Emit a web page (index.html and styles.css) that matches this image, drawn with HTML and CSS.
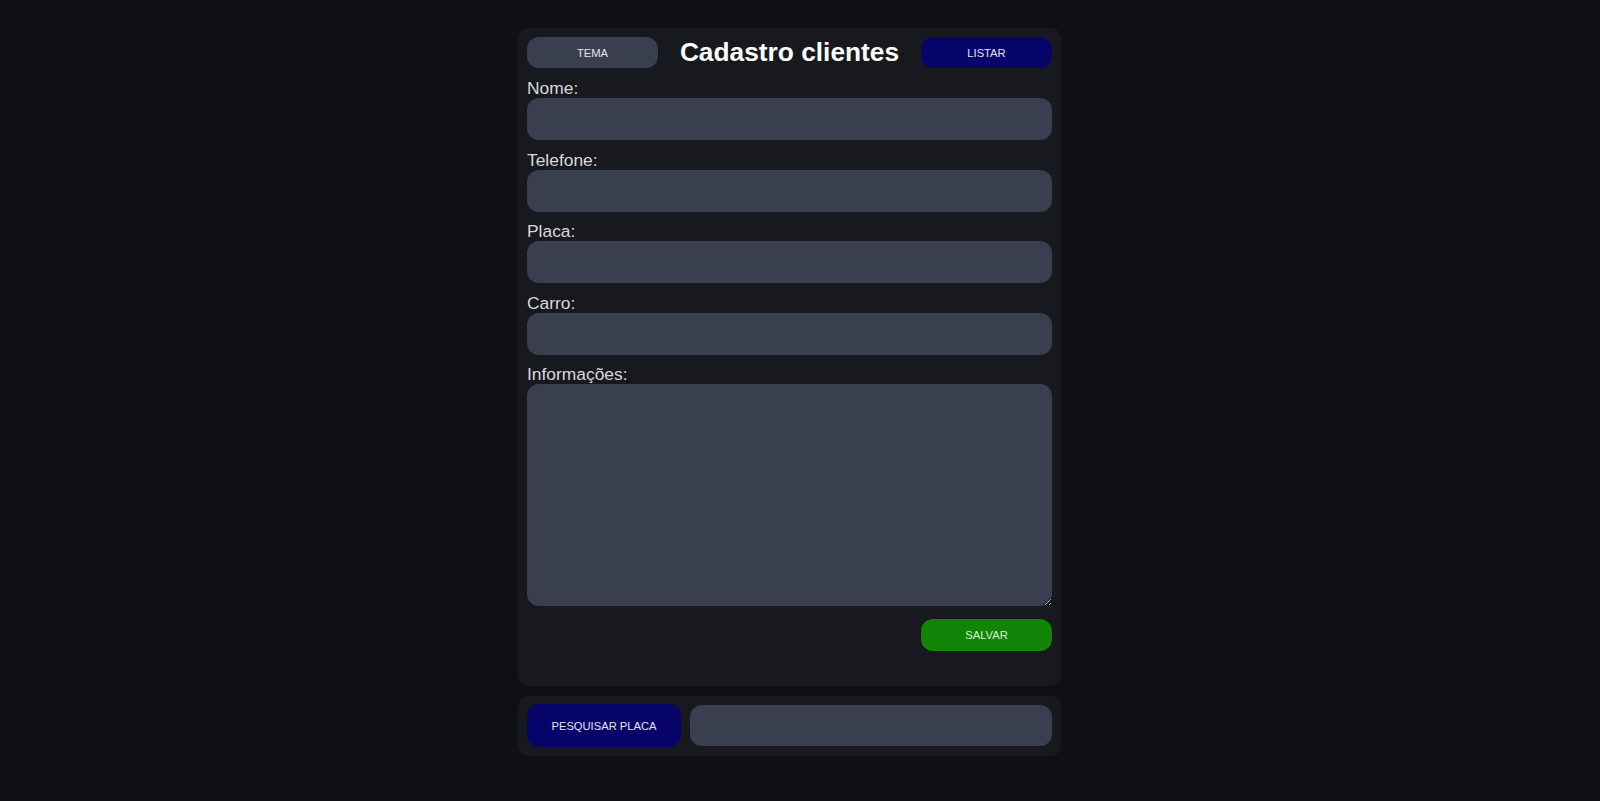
FILE: index.html
```html
<!DOCTYPE html>
<html lang="pt-BR">
<head>
<meta charset="utf-8">
<title>Cadastro clientes</title>
<link rel="stylesheet" href="styles.css">
</head>
<body>
<main class="page">
  <section class="card form-card">
    <header class="top-row">
      <button class="btn btn-gray">TEMA</button>
      <h1 class="title">Cadastro clientes</h1>
      <button class="btn btn-navy">LISTAR</button>
    </header>
    <form class="form">
      <label class="field"><span class="label">Nome:</span><input class="input" type="text"></label>
      <label class="field"><span class="label">Telefone:</span><input class="input" type="text"></label>
      <label class="field"><span class="label">Placa:</span><input class="input" type="text"></label>
      <label class="field"><span class="label">Carro:</span><input class="input" type="text"></label>
      <label class="field"><span class="label">Informações:</span><textarea class="textarea"></textarea></label>
      <div class="actions"><button type="button" class="btn btn-green">SALVAR</button></div>
    </form>
  </section>
  <section class="card search-card">
    <button class="btn btn-navy btn-search">PESQUISAR PLACA</button>
    <input class="input search-input" type="text">
  </section>
</main>
</body>
</html>
```
FILE: styles.css
```css
html, body {
  margin: 0;
  padding: 0;
  background: #0e1015;
  font-family: "Liberation Sans", Arial, sans-serif;
}
.page {
  display: flex;
  flex-direction: column;
  align-items: center;
  padding: 28px 21px 0 0;
  gap: 9.5px;
}
.card {
  width: 543px;
  box-sizing: border-box;
  background: #18191e;
  border-radius: 10px;
}
.form-card {
  padding: 9px 9px 35px 9px;
}
.top-row {
  display: flex;
  align-items: center;
  justify-content: space-between;
  height: 31px;
}
.title {
  margin: 0;
  color: #ffffff;
  font-size: 26.3px;
  font-weight: bold;
  line-height: 31px;
}
.btn {
  border: none;
  border-radius: 12px;
  width: 131px;
  height: 31px;
  font-family: "Liberation Sans", Arial, sans-serif;
  font-size: 11.2px;
  color: #e4e4ee;
  padding: 0;
  cursor: pointer;
}
.btn-gray { background: #3a3f50; }
.btn-navy { background: #08056a; }
.btn-green { background: #128407; color: #d6f0d2; height: 32px; }
.form {
  display: flex;
  flex-direction: column;
  margin-top: 10px;
}
.field {
  display: flex;
  flex-direction: column;
  margin-bottom: 9.5px;
}
.label {
  color: #d8d8dc;
  font-size: 17.4px;
  line-height: 20px;
}
.input, .textarea {
  display: block;
  box-sizing: border-box;
  width: 100%;
  border: none;
  border-radius: 12px;
  background: #3a3f50;
  color: #ffffff;
  outline: none;
  font-family: "Liberation Sans", Arial, sans-serif;
  font-size: 16px;
  padding: 0 12px;
}
.input { height: 42px; }
.textarea {
  height: 222px;
  padding: 10px 12px;
}
.field:last-of-type { margin-bottom: 0; }
.actions {
  display: flex;
  justify-content: flex-end;
  margin-top: 13px;
}
.search-card {
  display: flex;
  align-items: center;
  gap: 9px;
  padding: 8.5px 9px;
}
.btn-search {
  width: 154px;
  height: 43px;
  flex: none;
}
.search-input {
  flex: 1;
  height: 41px;
}
```
